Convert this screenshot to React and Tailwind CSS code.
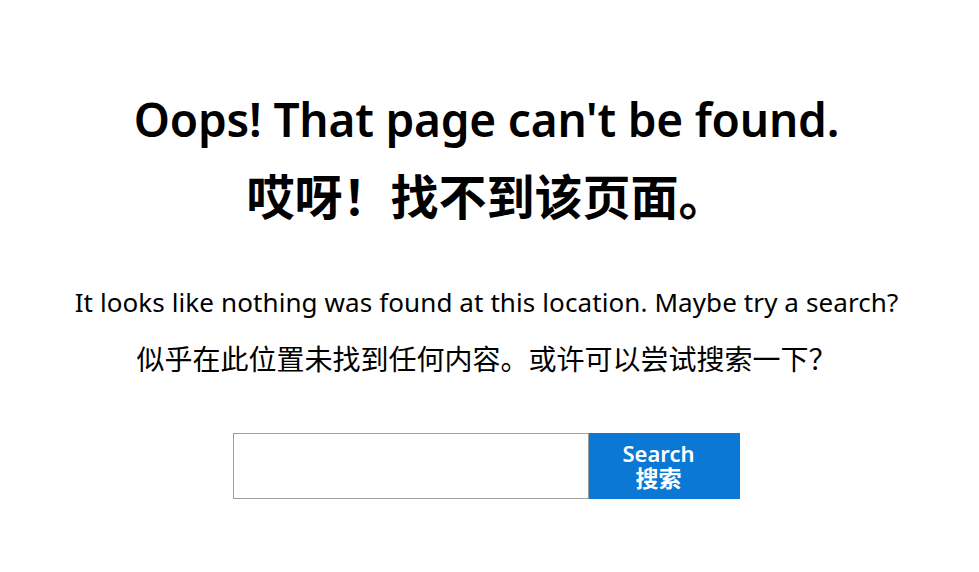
export default function App() {
  return (
    <div
      className="min-h-[572px] w-full bg-white text-black flex flex-col items-center pr-[6px]"
      style={{ fontFamily: '"Noto Sans", "Noto Sans CJK SC", sans-serif' }}
    >
      <div className="pt-[96px] flex flex-col items-center">
        <h1 className="text-[46px] leading-none font-semibold tracking-[-0.2px]">
          Oops! That page can't be found.
        </h1>
        <h1 className="mt-[31px] text-[48px] leading-none font-bold">
          哎呀！找不到该页面。
        </h1>

        <p className="mt-[68px] text-[26px] leading-none tracking-[0.1px]">
          It looks like nothing was found at this location. Maybe try a search?
        </p>
        <p className="mt-[30px] text-[28px] leading-none">
          似乎在此位置未找到任何内容。或许可以尝试搜索一下？
        </p>

        <form className="mt-[60px] flex" onSubmit={(e) => e.preventDefault()}>
          <input
            type="search"
            className="w-[356px] h-[66px] border border-[#9e9e9e] bg-white outline-none px-3 text-[20px]"
          />
          <button
            type="submit"
            className="w-[151px] h-[66px] bg-[#0a78d4] text-white font-semibold text-[22px] leading-[25px] flex flex-col items-center justify-center pr-[12px]"
          >
            <span>Search</span>
            <span className="text-[23px] leading-[25px] font-bold">搜索</span>
          </button>
        </form>
      </div>
    </div>
  );
}
